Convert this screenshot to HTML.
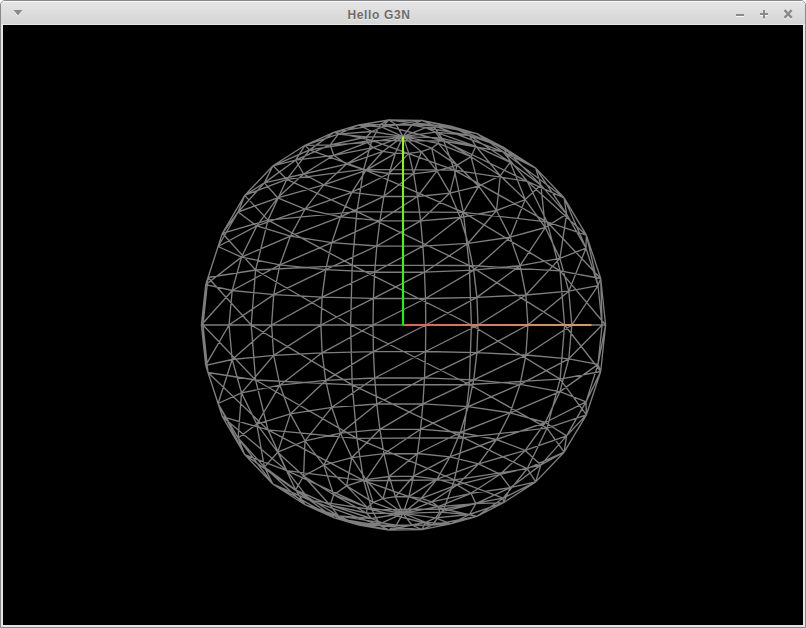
<!DOCTYPE html>
<html><head><meta charset="utf-8"><title>Hello G3N</title>
<style>
html,body{margin:0;padding:0;background:#000;overflow:hidden}
#win{position:relative;width:806px;height:628px;background:#fff;overflow:hidden;font-family:"Liberation Sans","DejaVu Sans",sans-serif}
#frame{position:absolute;left:0;top:0;width:804px;height:626px;border:1px solid #888;border-radius:5px 5px 0 0;background:#e5e5e5}
#tb{position:absolute;left:1px;top:1px;width:804px;height:24px;border-radius:4px 4px 0 0;background:linear-gradient(#fafafa 0,#fafafa 1px,#e5e5e5 1px,#d5d5d5 23px,#e8e8e8 23px)}
#title{position:absolute;left:0;top:0;width:758px;height:25px;line-height:30px;text-align:center;font-size:12px;font-weight:bold;color:#6c6c6c;letter-spacing:0.65px;text-shadow:0 1px 0 rgba(255,255,255,.7)}
#view{position:absolute;left:3px;top:25px;width:800px;height:600px;background:#000}
svg{position:absolute;left:0;top:0}
</style></head><body>
<div id="win"><div id="frame"></div><div id="tb"></div>
<div id="title">Hello G3N</div>
<div id="view"></div>
<svg width="806" height="628" viewBox="0 0 806 628">
<defs>
<linearGradient id="gr" x1="403" y1="0" x2="591.4" y2="0" gradientUnits="userSpaceOnUse"><stop offset="0" stop-color="#dc6060"/><stop offset="1" stop-color="#dc9a5c"/></linearGradient>
<linearGradient id="gg" x1="0" y1="325" x2="0" y2="136.6" gradientUnits="userSpaceOnUse"><stop offset="0" stop-color="#00ff00"/><stop offset="1" stop-color="#99ff00"/></linearGradient>
</defs>
<g fill="none" stroke="#fff" stroke-opacity=".75" transform="translate(0,1)"><path d="M13.5 10h9l-4.5 5.5z" fill="#fff" fill-opacity=".75" stroke="none"/>
<path d="M736 15h8M760 14h8M764 10v8.5" stroke-width="2"/><path d="M784.5 10.1l7.2 7.8M791.7 10.1l-7.2 7.8" stroke-width="2.4"/></g>
<path d="M13.5 10h9l-4.5 5.5z" fill="#8a8a8a"/>
<path d="M736 15h8M760 14h8M764 10v8.5" stroke="#8a8a8a" stroke-width="2"/>
<path d="M784.5 10.1l7.2 7.8M791.7 10.1l-7.2 7.8" stroke="#8a8a8a" stroke-width="2.4"/>
<path d="M403.0 136.6L411.8 125.0M403.0 136.6L425.7 127.7M403.0 136.6L435.5 132.2M403.0 136.6L439.7 137.8M403.0 136.6L438.2 143.4M403.0 136.6L431.7 148.2M403.0 136.6L421.4 151.7M403.0 136.6L408.8 153.4M403.0 136.6L395.4 153.3M403.0 136.6L383.0 151.3M403.0 136.6L373.1 147.6M403.0 136.6L367.2 142.6M403.0 136.6L366.5 137.0M403.0 136.6L371.6 131.5M403.0 136.6L382.0 127.2M403.0 136.6L396.3 124.8M411.8 125.0L425.7 127.7M411.8 125.0L396.3 124.8M411.8 125.0L421.8 120.4M411.8 125.0L450.6 126.1M425.7 127.7L435.5 132.2M425.7 127.7L450.6 126.1M425.7 127.7L469.4 135.5M435.5 132.2L439.7 137.8M435.5 132.2L469.4 135.5M435.5 132.2L475.9 146.3M439.7 137.8L438.2 143.4M439.7 137.8L475.9 146.3M439.7 137.8L471.0 156.7M438.2 143.4L431.7 148.2M438.2 143.4L471.0 156.7M438.2 143.4L457.1 165.1M431.7 148.2L421.4 151.7M431.7 148.2L457.1 165.1M431.7 148.2L437.0 170.9M421.4 151.7L408.8 153.4M421.4 151.7L437.0 170.9M421.4 151.7L413.6 173.8M408.8 153.4L395.4 153.3M408.8 153.4L413.6 173.8M408.8 153.4L389.1 173.5M395.4 153.3L383.0 151.3M395.4 153.3L389.1 173.5M395.4 153.3L366.0 170.3M383.0 151.3L373.1 147.6M383.0 151.3L366.0 170.3M383.0 151.3L346.6 164.1M373.1 147.6L367.2 142.6M373.1 147.6L346.6 164.1M373.1 147.6L333.7 155.3M367.2 142.6L366.5 137.0M367.2 142.6L333.7 155.3M367.2 142.6L330.2 144.8M366.5 137.0L371.6 131.5M366.5 137.0L330.2 144.8M366.5 137.0L338.4 134.1M371.6 131.5L382.0 127.2M371.6 131.5L338.4 134.1M371.6 131.5L358.9 125.0M382.0 127.2L396.3 124.8M382.0 127.2L358.9 125.0M382.0 127.2L388.7 120.0M396.3 124.8L421.8 120.4M396.3 124.8L388.7 120.0M421.8 120.4L450.6 126.1M421.8 120.4L388.7 120.0M421.8 120.4L432.6 125.0M421.8 120.4L476.9 133.6M450.6 126.1L469.4 135.5M450.6 126.1L476.9 133.6M450.6 126.1L503.5 147.3M469.4 135.5L475.9 146.3M469.4 135.5L503.5 147.3M469.4 135.5L510.2 162.3M475.9 146.3L471.0 156.7M475.9 146.3L510.2 162.3M475.9 146.3L500.3 175.7M471.0 156.7L457.1 165.1M471.0 156.7L500.3 175.7M471.0 156.7L478.7 186.2M457.1 165.1L437.0 170.9M457.1 165.1L478.7 186.2M457.1 165.1L449.9 193.1M437.0 170.9L413.6 173.8M437.0 170.9L449.9 193.1M437.0 170.9L417.5 196.5M413.6 173.8L389.1 173.5M413.6 173.8L417.5 196.5M413.6 173.8L383.9 196.3M389.1 173.5L366.0 170.3M389.1 173.5L383.9 196.3M389.1 173.5L351.8 192.4M366.0 170.3L346.6 164.1M366.0 170.3L351.8 192.4M366.0 170.3L323.8 184.9M346.6 164.1L333.7 155.3M346.6 164.1L323.8 184.9M346.6 164.1L303.6 174.0M333.7 155.3L330.2 144.8M333.7 155.3L303.6 174.0M333.7 155.3L295.6 160.2M330.2 144.8L338.4 134.1M330.2 144.8L295.6 160.2M330.2 144.8L305.0 145.3M338.4 134.1L358.9 125.0M338.4 134.1L305.0 145.3M338.4 134.1L334.3 132.1M358.9 125.0L388.7 120.0M358.9 125.0L334.3 132.1M358.9 125.0L380.4 124.4M388.7 120.0L432.6 125.0M388.7 120.0L380.4 124.4M432.6 125.0L476.9 133.6M432.6 125.0L380.4 124.4M432.6 125.0L443.8 141.0M432.6 125.0L503.1 151.8M476.9 133.6L503.5 147.3M476.9 133.6L503.1 151.8M476.9 133.6L535.7 168.1M503.5 147.3L510.2 162.3M503.5 147.3L535.7 168.1M503.5 147.3L540.9 185.1M510.2 162.3L500.3 175.7M510.2 162.3L540.9 185.1M510.2 162.3L525.2 199.6M500.3 175.7L478.7 186.2M500.3 175.7L525.2 199.6M500.3 175.7L496.5 210.5M478.7 186.2L449.9 193.1M478.7 186.2L496.5 210.5M478.7 186.2L460.3 217.5M449.9 193.1L417.5 196.5M449.9 193.1L460.3 217.5M449.9 193.1L420.6 220.8M417.5 196.5L383.9 196.3M417.5 196.5L420.6 220.8M417.5 196.5L379.9 220.6M383.9 196.3L351.8 192.4M383.9 196.3L379.9 220.6M383.9 196.3L340.5 216.8M351.8 192.4L323.8 184.9M351.8 192.4L340.5 216.8M351.8 192.4L305.0 209.2M323.8 184.9L303.6 174.0M323.8 184.9L305.0 209.2M323.8 184.9L277.7 197.8M303.6 174.0L295.6 160.2M303.6 174.0L277.7 197.8M303.6 174.0L264.4 182.9M295.6 160.2L305.0 145.3M295.6 160.2L264.4 182.9M295.6 160.2L273.0 165.8M305.0 145.3L334.3 132.1M305.0 145.3L273.0 165.8M305.0 145.3L309.7 149.9M334.3 132.1L380.4 124.4M334.3 132.1L309.7 149.9M334.3 132.1L371.9 140.3M380.4 124.4L443.8 141.0M380.4 124.4L371.9 140.3M443.8 141.0L503.1 151.8M443.8 141.0L371.9 140.3M443.8 141.0L454.4 170.1M443.8 141.0L527.2 181.3M503.1 151.8L535.7 168.1M503.1 151.8L527.2 181.3M503.1 151.8L564.1 197.8M535.7 168.1L540.9 185.1M535.7 168.1L564.1 197.8M535.7 168.1L566.6 214.1M540.9 185.1L525.2 199.6M540.9 185.1L566.6 214.1M540.9 185.1L545.3 227.5M525.2 199.6L496.5 210.5M525.2 199.6L545.3 227.5M525.2 199.6L510.2 237.2M496.5 210.5L460.3 217.5M496.5 210.5L510.2 237.2M496.5 210.5L468.1 243.3M460.3 217.5L420.6 220.8M460.3 217.5L468.1 243.3M460.3 217.5L422.9 246.2M420.6 220.8L379.9 220.6M420.6 220.8L422.9 246.2M420.6 220.8L376.8 246.0M379.9 220.6L340.5 216.8M379.9 220.6L376.8 246.0M379.9 220.6L331.8 242.7M340.5 216.8L305.0 209.2M340.5 216.8L331.8 242.7M340.5 216.8L290.4 236.1M305.0 209.2L277.7 197.8M305.0 209.2L290.4 236.1M305.0 209.2L256.8 225.9M277.7 197.8L264.4 182.9M277.7 197.8L256.8 225.9M277.7 197.8L238.1 212.0M264.4 182.9L273.0 165.8M264.4 182.9L238.1 212.0M264.4 182.9L244.7 195.4M273.0 165.8L309.7 149.9M273.0 165.8L244.7 195.4M273.0 165.8L286.8 179.3M309.7 149.9L371.9 140.3M309.7 149.9L286.8 179.3M309.7 149.9L363.7 169.3M371.9 140.3L454.4 170.1M371.9 140.3L363.7 169.3M454.4 170.1L527.2 181.3M454.4 170.1L363.7 169.3M454.4 170.1L463.3 212.3M454.4 170.1L547.0 221.8M527.2 181.3L564.1 197.8M527.2 181.3L547.0 221.8M527.2 181.3L586.4 235.2M564.1 197.8L566.6 214.1M564.1 197.8L586.4 235.2M564.1 197.8L586.0 248.1M566.6 214.1L545.3 227.5M566.6 214.1L586.0 248.1M566.6 214.1L559.9 258.4M545.3 227.5L510.2 237.2M545.3 227.5L559.9 258.4M545.3 227.5L520.1 265.6M510.2 237.2L468.1 243.3M510.2 237.2L520.1 265.6M510.2 237.2L473.7 270.1M468.1 243.3L422.9 246.2M468.1 243.3L473.7 270.1M468.1 243.3L424.5 272.2M422.9 246.2L376.8 246.0M422.9 246.2L424.5 272.2M422.9 246.2L374.7 272.0M376.8 246.0L331.8 242.7M376.8 246.0L374.7 272.0M376.8 246.0L325.7 269.6M331.8 242.7L290.4 236.1M331.8 242.7L325.7 269.6M331.8 242.7L279.9 264.8M290.4 236.1L256.8 225.9M290.4 236.1L279.9 264.8M290.4 236.1L241.5 257.1M256.8 225.9L238.1 212.0M256.8 225.9L241.5 257.1M256.8 225.9L218.1 246.5M238.1 212.0L244.7 195.4M238.1 212.0L218.1 246.5M238.1 212.0L222.4 233.3M244.7 195.4L286.8 179.3M244.7 195.4L222.4 233.3M244.7 195.4L268.0 220.1M286.8 179.3L363.7 169.3M286.8 179.3L268.0 220.1M286.8 179.3L356.9 211.6M363.7 169.3L463.3 212.3M363.7 169.3L356.9 211.6M463.3 212.3L547.0 221.8M463.3 212.3L356.9 211.6M463.3 212.3L469.3 265.5M463.3 212.3L560.1 270.9M547.0 221.8L586.4 235.2M547.0 221.8L560.1 270.9M547.0 221.8L600.7 278.5M586.4 235.2L586.0 248.1M586.4 235.2L600.7 278.5M586.4 235.2L598.0 285.6M586.0 248.1L559.9 258.4M586.0 248.1L598.0 285.6M586.0 248.1L568.8 291.2M559.9 258.4L520.1 265.6M559.9 258.4L568.8 291.2M559.9 258.4L525.9 295.0M520.1 265.6L473.7 270.1M520.1 265.6L525.9 295.0M520.1 265.6L476.9 297.4M473.7 270.1L424.5 272.2M473.7 270.1L476.9 297.4M473.7 270.1L425.5 298.5M424.5 272.2L374.7 272.0M424.5 272.2L425.5 298.5M424.5 272.2L373.4 298.4M374.7 272.0L325.7 269.6M374.7 272.0L373.4 298.4M374.7 272.0L322.1 297.2M325.7 269.6L279.9 264.8M325.7 269.6L322.1 297.2M325.7 269.6L273.7 294.6M279.9 264.8L241.5 257.1M279.9 264.8L273.7 294.6M279.9 264.8L232.2 290.5M241.5 257.1L218.1 246.5M241.5 257.1L232.2 290.5M241.5 257.1L205.7 284.7M218.1 246.5L222.4 233.3M218.1 246.5L205.7 284.7M218.1 246.5L208.0 277.5M222.4 233.3L268.0 220.1M222.4 233.3L208.0 277.5M222.4 233.3L255.6 270.0M268.0 220.1L356.9 211.6M268.0 220.1L255.6 270.0M268.0 220.1L352.2 265.1M356.9 211.6L469.3 265.5M356.9 211.6L352.2 265.1M469.3 265.5L560.1 270.9M469.3 265.5L352.2 265.1M469.3 265.5L471.4 325.0M469.3 265.5L564.6 325.0M560.1 270.9L600.7 278.5M560.1 270.9L564.6 325.0M560.1 270.9L605.6 325.0M600.7 278.5L598.0 285.6M600.7 278.5L605.6 325.0M600.7 278.5L602.1 325.0M598.0 285.6L568.8 291.2M598.0 285.6L602.1 325.0M598.0 285.6L571.8 325.0M568.8 291.2L525.9 295.0M568.8 291.2L571.8 325.0M568.8 291.2L527.9 325.0M525.9 295.0L476.9 297.4M525.9 295.0L527.9 325.0M525.9 295.0L478.0 325.0M476.9 297.4L425.5 298.5M476.9 297.4L478.0 325.0M476.9 297.4L425.8 325.0M425.5 298.5L373.4 298.4M425.5 298.5L425.8 325.0M425.5 298.5L373.0 325.0M373.4 298.4L322.1 297.2M373.4 298.4L373.0 325.0M373.4 298.4L320.9 325.0M322.1 297.2L273.7 294.6M322.1 297.2L320.9 325.0M322.1 297.2L271.6 325.0M273.7 294.6L232.2 290.5M273.7 294.6L271.6 325.0M273.7 294.6L229.0 325.0M232.2 290.5L205.7 284.7M232.2 290.5L229.0 325.0M232.2 290.5L201.4 325.0M205.7 284.7L208.0 277.5M205.7 284.7L201.4 325.0M205.7 284.7L203.0 325.0M208.0 277.5L255.6 270.0M208.0 277.5L203.0 325.0M208.0 277.5L251.2 325.0M255.6 270.0L352.2 265.1M255.6 270.0L251.2 325.0M255.6 270.0L350.6 325.0M352.2 265.1L471.4 325.0M352.2 265.1L350.6 325.0M471.4 325.0L564.6 325.0M471.4 325.0L350.6 325.0M471.4 325.0L469.3 384.5M471.4 325.0L560.1 379.1M564.6 325.0L605.6 325.0M564.6 325.0L560.1 379.1M564.6 325.0L600.7 371.5M605.6 325.0L602.1 325.0M605.6 325.0L600.7 371.5M605.6 325.0L598.0 364.4M602.1 325.0L571.8 325.0M602.1 325.0L598.0 364.4M602.1 325.0L568.8 358.8M571.8 325.0L527.9 325.0M571.8 325.0L568.8 358.8M571.8 325.0L525.9 355.0M527.9 325.0L478.0 325.0M527.9 325.0L525.9 355.0M527.9 325.0L476.9 352.6M478.0 325.0L425.8 325.0M478.0 325.0L476.9 352.6M478.0 325.0L425.5 351.5M425.8 325.0L373.0 325.0M425.8 325.0L425.5 351.5M425.8 325.0L373.4 351.6M373.0 325.0L320.9 325.0M373.0 325.0L373.4 351.6M373.0 325.0L322.1 352.8M320.9 325.0L271.6 325.0M320.9 325.0L322.1 352.8M320.9 325.0L273.7 355.4M271.6 325.0L229.0 325.0M271.6 325.0L273.7 355.4M271.6 325.0L232.2 359.5M229.0 325.0L201.4 325.0M229.0 325.0L232.2 359.5M229.0 325.0L205.7 365.3M201.4 325.0L203.0 325.0M201.4 325.0L205.7 365.3M201.4 325.0L208.0 372.5M203.0 325.0L251.2 325.0M203.0 325.0L208.0 372.5M203.0 325.0L255.6 380.0M251.2 325.0L350.6 325.0M251.2 325.0L255.6 380.0M251.2 325.0L352.2 384.9M350.6 325.0L469.3 384.5M350.6 325.0L352.2 384.9M469.3 384.5L560.1 379.1M469.3 384.5L352.2 384.9M469.3 384.5L463.3 437.7M469.3 384.5L547.0 428.2M560.1 379.1L600.7 371.5M560.1 379.1L547.0 428.2M560.1 379.1L586.4 414.8M600.7 371.5L598.0 364.4M600.7 371.5L586.4 414.8M600.7 371.5L586.0 401.9M598.0 364.4L568.8 358.8M598.0 364.4L586.0 401.9M598.0 364.4L559.9 391.6M568.8 358.8L525.9 355.0M568.8 358.8L559.9 391.6M568.8 358.8L520.1 384.4M525.9 355.0L476.9 352.6M525.9 355.0L520.1 384.4M525.9 355.0L473.7 379.9M476.9 352.6L425.5 351.5M476.9 352.6L473.7 379.9M476.9 352.6L424.5 377.8M425.5 351.5L373.4 351.6M425.5 351.5L424.5 377.8M425.5 351.5L374.7 378.0M373.4 351.6L322.1 352.8M373.4 351.6L374.7 378.0M373.4 351.6L325.7 380.4M322.1 352.8L273.7 355.4M322.1 352.8L325.7 380.4M322.1 352.8L279.9 385.2M273.7 355.4L232.2 359.5M273.7 355.4L279.9 385.2M273.7 355.4L241.5 392.9M232.2 359.5L205.7 365.3M232.2 359.5L241.5 392.9M232.2 359.5L218.1 403.5M205.7 365.3L208.0 372.5M205.7 365.3L218.1 403.5M205.7 365.3L222.4 416.7M208.0 372.5L255.6 380.0M208.0 372.5L222.4 416.7M208.0 372.5L268.0 429.9M255.6 380.0L352.2 384.9M255.6 380.0L268.0 429.9M255.6 380.0L356.9 438.4M352.2 384.9L463.3 437.7M352.2 384.9L356.9 438.4M463.3 437.7L547.0 428.2M463.3 437.7L356.9 438.4M463.3 437.7L454.4 479.9M463.3 437.7L527.2 468.7M547.0 428.2L586.4 414.8M547.0 428.2L527.2 468.7M547.0 428.2L564.1 452.2M586.4 414.8L586.0 401.9M586.4 414.8L564.1 452.2M586.4 414.8L566.6 435.9M586.0 401.9L559.9 391.6M586.0 401.9L566.6 435.9M586.0 401.9L545.3 422.5M559.9 391.6L520.1 384.4M559.9 391.6L545.3 422.5M559.9 391.6L510.2 412.8M520.1 384.4L473.7 379.9M520.1 384.4L510.2 412.8M520.1 384.4L468.1 406.7M473.7 379.9L424.5 377.8M473.7 379.9L468.1 406.7M473.7 379.9L422.9 403.8M424.5 377.8L374.7 378.0M424.5 377.8L422.9 403.8M424.5 377.8L376.8 404.0M374.7 378.0L325.7 380.4M374.7 378.0L376.8 404.0M374.7 378.0L331.8 407.3M325.7 380.4L279.9 385.2M325.7 380.4L331.8 407.3M325.7 380.4L290.4 413.9M279.9 385.2L241.5 392.9M279.9 385.2L290.4 413.9M279.9 385.2L256.8 424.1M241.5 392.9L218.1 403.5M241.5 392.9L256.8 424.1M241.5 392.9L238.1 438.0M218.1 403.5L222.4 416.7M218.1 403.5L238.1 438.0M218.1 403.5L244.7 454.6M222.4 416.7L268.0 429.9M222.4 416.7L244.7 454.6M222.4 416.7L286.8 470.7M268.0 429.9L356.9 438.4M268.0 429.9L286.8 470.7M268.0 429.9L363.7 480.7M356.9 438.4L454.4 479.9M356.9 438.4L363.7 480.7M454.4 479.9L527.2 468.7M454.4 479.9L363.7 480.7M454.4 479.9L443.8 509.0M454.4 479.9L503.1 498.2M527.2 468.7L564.1 452.2M527.2 468.7L503.1 498.2M527.2 468.7L535.7 481.9M564.1 452.2L566.6 435.9M564.1 452.2L535.7 481.9M564.1 452.2L540.9 464.9M566.6 435.9L545.3 422.5M566.6 435.9L540.9 464.9M566.6 435.9L525.2 450.4M545.3 422.5L510.2 412.8M545.3 422.5L525.2 450.4M545.3 422.5L496.5 439.5M510.2 412.8L468.1 406.7M510.2 412.8L496.5 439.5M510.2 412.8L460.3 432.5M468.1 406.7L422.9 403.8M468.1 406.7L460.3 432.5M468.1 406.7L420.6 429.2M422.9 403.8L376.8 404.0M422.9 403.8L420.6 429.2M422.9 403.8L379.9 429.4M376.8 404.0L331.8 407.3M376.8 404.0L379.9 429.4M376.8 404.0L340.5 433.2M331.8 407.3L290.4 413.9M331.8 407.3L340.5 433.2M331.8 407.3L305.0 440.8M290.4 413.9L256.8 424.1M290.4 413.9L305.0 440.8M290.4 413.9L277.7 452.2M256.8 424.1L238.1 438.0M256.8 424.1L277.7 452.2M256.8 424.1L264.4 467.1M238.1 438.0L244.7 454.6M238.1 438.0L264.4 467.1M238.1 438.0L273.0 484.2M244.7 454.6L286.8 470.7M244.7 454.6L273.0 484.2M244.7 454.6L309.7 500.1M286.8 470.7L363.7 480.7M286.8 470.7L309.7 500.1M286.8 470.7L371.9 509.7M363.7 480.7L443.8 509.0M363.7 480.7L371.9 509.7M443.8 509.0L503.1 498.2M443.8 509.0L371.9 509.7M443.8 509.0L432.6 525.0M443.8 509.0L476.9 516.4M503.1 498.2L535.7 481.9M503.1 498.2L476.9 516.4M503.1 498.2L503.5 502.7M535.7 481.9L540.9 464.9M535.7 481.9L503.5 502.7M535.7 481.9L510.2 487.7M540.9 464.9L525.2 450.4M540.9 464.9L510.2 487.7M540.9 464.9L500.3 474.3M525.2 450.4L496.5 439.5M525.2 450.4L500.3 474.3M525.2 450.4L478.7 463.8M496.5 439.5L460.3 432.5M496.5 439.5L478.7 463.8M496.5 439.5L449.9 456.9M460.3 432.5L420.6 429.2M460.3 432.5L449.9 456.9M460.3 432.5L417.5 453.5M420.6 429.2L379.9 429.4M420.6 429.2L417.5 453.5M420.6 429.2L383.9 453.7M379.9 429.4L340.5 433.2M379.9 429.4L383.9 453.7M379.9 429.4L351.8 457.6M340.5 433.2L305.0 440.8M340.5 433.2L351.8 457.6M340.5 433.2L323.8 465.1M305.0 440.8L277.7 452.2M305.0 440.8L323.8 465.1M305.0 440.8L303.6 476.0M277.7 452.2L264.4 467.1M277.7 452.2L303.6 476.0M277.7 452.2L295.6 489.8M264.4 467.1L273.0 484.2M264.4 467.1L295.6 489.8M264.4 467.1L305.0 504.7M273.0 484.2L309.7 500.1M273.0 484.2L305.0 504.7M273.0 484.2L334.3 517.9M309.7 500.1L371.9 509.7M309.7 500.1L334.3 517.9M309.7 500.1L380.4 525.6M371.9 509.7L432.6 525.0M371.9 509.7L380.4 525.6M432.6 525.0L476.9 516.4M432.6 525.0L380.4 525.6M432.6 525.0L421.8 529.6M432.6 525.0L450.6 523.9M476.9 516.4L503.5 502.7M476.9 516.4L450.6 523.9M476.9 516.4L469.4 514.5M503.5 502.7L510.2 487.7M503.5 502.7L469.4 514.5M503.5 502.7L475.9 503.7M510.2 487.7L500.3 474.3M510.2 487.7L475.9 503.7M510.2 487.7L471.0 493.3M500.3 474.3L478.7 463.8M500.3 474.3L471.0 493.3M500.3 474.3L457.1 484.9M478.7 463.8L449.9 456.9M478.7 463.8L457.1 484.9M478.7 463.8L437.0 479.1M449.9 456.9L417.5 453.5M449.9 456.9L437.0 479.1M449.9 456.9L413.6 476.2M417.5 453.5L383.9 453.7M417.5 453.5L413.6 476.2M417.5 453.5L389.1 476.5M383.9 453.7L351.8 457.6M383.9 453.7L389.1 476.5M383.9 453.7L366.0 479.7M351.8 457.6L323.8 465.1M351.8 457.6L366.0 479.7M351.8 457.6L346.6 485.9M323.8 465.1L303.6 476.0M323.8 465.1L346.6 485.9M323.8 465.1L333.7 494.7M303.6 476.0L295.6 489.8M303.6 476.0L333.7 494.7M303.6 476.0L330.2 505.2M295.6 489.8L305.0 504.7M295.6 489.8L330.2 505.2M295.6 489.8L338.4 515.9M305.0 504.7L334.3 517.9M305.0 504.7L338.4 515.9M305.0 504.7L358.9 525.0M334.3 517.9L380.4 525.6M334.3 517.9L358.9 525.0M334.3 517.9L388.7 530.0M380.4 525.6L421.8 529.6M380.4 525.6L388.7 530.0M421.8 529.6L450.6 523.9M421.8 529.6L388.7 530.0M421.8 529.6L411.8 525.0M421.8 529.6L425.7 522.3M450.6 523.9L469.4 514.5M450.6 523.9L425.7 522.3M450.6 523.9L435.5 517.8M469.4 514.5L475.9 503.7M469.4 514.5L435.5 517.8M469.4 514.5L439.7 512.2M475.9 503.7L471.0 493.3M475.9 503.7L439.7 512.2M475.9 503.7L438.2 506.6M471.0 493.3L457.1 484.9M471.0 493.3L438.2 506.6M471.0 493.3L431.7 501.8M457.1 484.9L437.0 479.1M457.1 484.9L431.7 501.8M457.1 484.9L421.4 498.3M437.0 479.1L413.6 476.2M437.0 479.1L421.4 498.3M437.0 479.1L408.8 496.6M413.6 476.2L389.1 476.5M413.6 476.2L408.8 496.6M413.6 476.2L395.4 496.7M389.1 476.5L366.0 479.7M389.1 476.5L395.4 496.7M389.1 476.5L383.0 498.7M366.0 479.7L346.6 485.9M366.0 479.7L383.0 498.7M366.0 479.7L373.1 502.4M346.6 485.9L333.7 494.7M346.6 485.9L373.1 502.4M346.6 485.9L367.2 507.4M333.7 494.7L330.2 505.2M333.7 494.7L367.2 507.4M333.7 494.7L366.5 513.0M330.2 505.2L338.4 515.9M330.2 505.2L366.5 513.0M330.2 505.2L371.6 518.5M338.4 515.9L358.9 525.0M338.4 515.9L371.6 518.5M338.4 515.9L382.0 522.8M358.9 525.0L388.7 530.0M358.9 525.0L382.0 522.8M358.9 525.0L396.3 525.2M388.7 530.0L411.8 525.0M388.7 530.0L396.3 525.2M411.8 525.0L425.7 522.3M411.8 525.0L396.3 525.2M411.8 525.0L403.0 513.4M425.7 522.3L435.5 517.8M425.7 522.3L403.0 513.4M435.5 517.8L439.7 512.2M435.5 517.8L403.0 513.4M439.7 512.2L438.2 506.6M439.7 512.2L403.0 513.4M438.2 506.6L431.7 501.8M438.2 506.6L403.0 513.4M431.7 501.8L421.4 498.3M431.7 501.8L403.0 513.4M421.4 498.3L408.8 496.6M421.4 498.3L403.0 513.4M408.8 496.6L395.4 496.7M408.8 496.6L403.0 513.4M395.4 496.7L383.0 498.7M395.4 496.7L403.0 513.4M383.0 498.7L373.1 502.4M383.0 498.7L403.0 513.4M373.1 502.4L367.2 507.4M373.1 502.4L403.0 513.4M367.2 507.4L366.5 513.0M367.2 507.4L403.0 513.4M366.5 513.0L371.6 518.5M366.5 513.0L403.0 513.4M371.6 518.5L382.0 522.8M371.6 518.5L403.0 513.4M382.0 522.8L396.3 525.2M382.0 522.8L403.0 513.4M396.3 525.2L403.0 513.4" fill="none" stroke="#7e7e7e" stroke-width="1.35" stroke-linecap="butt"/>
<path d="M403 325H591.4" stroke="url(#gr)" stroke-width="2"/>
<path d="M403 325V136.6" stroke="url(#gg)" stroke-width="2"/>
</svg>
</div></body></html>
